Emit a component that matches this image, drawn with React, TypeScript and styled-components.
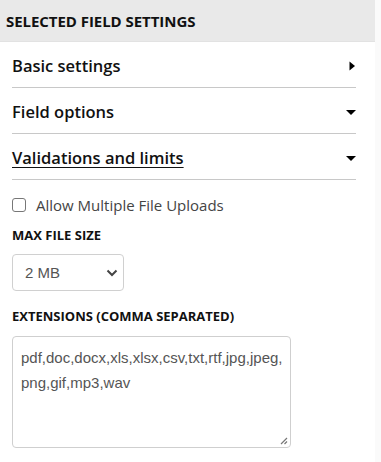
import React from "react";
import styled, { createGlobalStyle } from "styled-components";

const Global = createGlobalStyle`
  html, body { margin: 0; padding: 0; background: #fafafa; }
  body { font-family: "Open Sans", sans-serif; }
`;

const Panel = styled.div`
  width: 375px;
  min-height: 462px;
  background: #ffffff;
  display: flex;
  flex-direction: column;
`;

const Header = styled.div`
  height: 42px;
  box-sizing: border-box;
  background: #e9e9e9;
  border-bottom: 1px solid #e2e2e2;
  display: flex;
  align-items: center;
  padding: 0 6px;
  font-family: "Open Sans", sans-serif;
  font-weight: 700;
  font-size: 15px;
  letter-spacing: -0.05px;
  color: #111;
`;

const Sections = styled.div`
  padding: 0 19px 0 12px;
  display: flex;
  flex-direction: column;
`;

const SectionRow = styled.div<{ $active?: boolean }>`
  height: 46px;
  box-sizing: border-box;
  border-bottom: 1px solid #c8c8c8;
  display: flex;
  align-items: center;
  justify-content: space-between;
  padding-top: 2px;
  font-family: "Open Sans", sans-serif;
  font-weight: 600;
  font-size: 16.5px;
  color: #111;
  text-decoration: ${(p) => (p.$active ? "underline" : "none")};
  text-underline-offset: 3px;
  text-decoration-thickness: 1px;
`;

const Caret = styled.svg`
  width: 10px;
  height: 10px;
  flex: none;
`;

const Body = styled.div`
  padding: 14px 12px 0 12px;
  display: flex;
  flex-direction: column;
`;

const CheckRow = styled.label`
  display: flex;
  align-items: center;
  gap: 10px;
  font-family: "Open Sans", sans-serif;
  font-size: 15px;
  color: #444;
  height: 22px;
`;

const CheckBox = styled.span`
  width: 14px;
  height: 14px;
  border: 1px solid #777;
  border-radius: 3px;
  box-sizing: border-box;
  background: #fff;
`;

const FieldLabel = styled.div<{ $top: number }>`
  margin-top: ${(p) => p.$top}px;
  font-family: "Open Sans", sans-serif;
  font-weight: 700;
  font-size: 13px;
  color: #111;
  line-height: 16px;
`;

const SelectBox = styled.div`
  margin-top: 11px;
  width: 112px;
  height: 37px;
  box-sizing: border-box;
  border: 1px solid #d0d0d0;
  border-radius: 4px;
  display: flex;
  align-items: center;
  justify-content: space-between;
  padding: 0 5px 0 12px;
  font-family: "Liberation Sans", Arial, sans-serif;
  font-size: 15px;
  color: #555;
`;

const TextArea = styled.div`
  position: relative;
  margin-top: 12px;
  width: 279px;
  height: 112px;
  box-sizing: border-box;
  border: 1px solid #cfcfcf;
  border-radius: 4px;
  padding: 8px 4px 8px 8px;
  font-family: "Liberation Sans", Arial, sans-serif;
  font-size: 15px;
  line-height: 25px;
  color: #555;
`;

const Grip = styled.svg`
  position: absolute;
  right: 2px;
  bottom: 2px;
  width: 9px;
  height: 9px;
`;

export default function App() {
  return (
    <>
      <Global />
      <Panel>
        <Header>SELECTED FIELD SETTINGS</Header>
        <Sections>
          <SectionRow>
            Basic settings
            <Caret viewBox="0 0 10 10">
              <path d="M3.5 0.5 L9 5 L3.5 9.5 Z" fill="#000" />
            </Caret>
          </SectionRow>
          <SectionRow>
            Field options
            <Caret viewBox="0 0 10 10">
              <path d="M0 3 L10 3 L5 8 Z" fill="#000" />
            </Caret>
          </SectionRow>
          <SectionRow $active>
            Validations and limits
            <Caret viewBox="0 0 10 10">
              <path d="M0 3 L10 3 L5 8 Z" fill="#000" />
            </Caret>
          </SectionRow>
        </Sections>
        <Body>
          <CheckRow>
            <CheckBox />
            Allow Multiple File Uploads
          </CheckRow>
          <FieldLabel $top={11}>MAX FILE SIZE</FieldLabel>
          <SelectBox>
            2 MB
            <svg width="12" height="8" viewBox="0 0 12 8">
              <path d="M1.5 1.5 L6 6 L10.5 1.5" stroke="#444" strokeWidth="2" fill="none" />
            </svg>
          </SelectBox>
          <FieldLabel $top={17}>EXTENSIONS (COMMA SEPARATED)</FieldLabel>
          <TextArea>
            pdf,doc,docx,xls,xlsx,csv,txt,rtf,jpg,jpeg,<wbr />png,gif,mp3,wav
            <Grip viewBox="0 0 9 9">
              <path d="M8 2 L2 8 M8 5.5 L5.5 8" stroke="#777" strokeWidth="1.2" />
            </Grip>
          </TextArea>
        </Body>
      </Panel>
    </>
  );
}
